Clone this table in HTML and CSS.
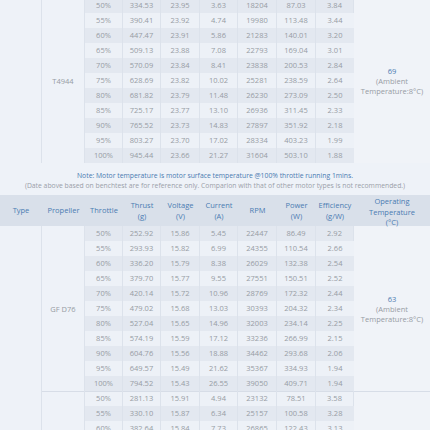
FILE: index.html
```html
<!DOCTYPE html>
<html lang="en">
<head>
    <meta charset="UTF-8">
    <meta name="viewport" content="width=device-width, initial-scale=1">
    <title>Motor Test Data</title>
    <link rel="stylesheet" href="styles.css">
</head>
<body>

<div class="page">

    <table class="data top">
        <colgroup>
            <col class="cType"><col class="cProp"><col class="cNum"><col class="cNum"><col class="cNum2"><col class="cNum"><col class="cNum2"><col class="cNum2"><col class="cNum"><col class="cTemp">
        </colgroup>
        <tbody>
            <tr><td class="merged" rowspan="11"></td><td class="merged" rowspan="11">T4944</td><td>50%</td><td>334.53</td><td>23.95</td><td>3.63</td><td>18204</td><td>87.03</td><td>3.84</td><td class="merged temp" rowspan="11"><span class="hot">69</span><br>(Ambient<br>Temperature:8°C)</td></tr>
            <tr><td>55%</td><td>390.41</td><td>23.92</td><td>4.74</td><td>19980</td><td>113.48</td><td>3.44</td></tr>
            <tr><td>60%</td><td>447.47</td><td>23.91</td><td>5.86</td><td>21283</td><td>140.01</td><td>3.20</td></tr>
            <tr><td>65%</td><td>509.13</td><td>23.88</td><td>7.08</td><td>22793</td><td>169.04</td><td>3.01</td></tr>
            <tr><td>70%</td><td>570.09</td><td>23.84</td><td>8.41</td><td>23838</td><td>200.53</td><td>2.84</td></tr>
            <tr><td>75%</td><td>628.69</td><td>23.82</td><td>10.02</td><td>25281</td><td>238.59</td><td>2.64</td></tr>
            <tr><td>80%</td><td>681.82</td><td>23.79</td><td>11.48</td><td>26230</td><td>273.09</td><td>2.50</td></tr>
            <tr><td>85%</td><td>725.17</td><td>23.77</td><td>13.10</td><td>26936</td><td>311.45</td><td>2.33</td></tr>
            <tr><td>90%</td><td>765.52</td><td>23.73</td><td>14.83</td><td>27897</td><td>351.92</td><td>2.18</td></tr>
            <tr><td>95%</td><td>803.27</td><td>23.70</td><td>17.02</td><td>28334</td><td>403.23</td><td>1.99</td></tr>
            <tr><td>100%</td><td>945.44</td><td>23.66</td><td>21.27</td><td>31604</td><td>503.10</td><td>1.88</td></tr>
        </tbody>
    </table>

    <div class="note">
        <p class="noteMain">Note: Motor temperature is motor surface temperature @100% throttle running 1mins.</p>
        <p class="noteSub">(Date above based on benchtest are for reference only. Comparion with that of other motor types is not recommended.)</p>
    </div>

    <table class="data">
        <colgroup>
            <col class="cType"><col class="cProp"><col class="cNum"><col class="cNum"><col class="cNum2"><col class="cNum"><col class="cNum2"><col class="cNum2"><col class="cNum"><col class="cTemp">
        </colgroup>
        <thead>
            <tr>
                <th>Type</th>
                <th>Propeller</th>
                <th>Throttle</th>
                <th>Thrust<br>(g)</th>
                <th>Voltage<br>(V)</th>
                <th>Current<br>(A)</th>
                <th>RPM</th>
                <th>Power<br>(W)</th>
                <th>Efficiency<br>(g/W)</th>
                <th><div class="tall">Operating<br>Temperature<br>(°C)</div></th>
            </tr>
        </thead>
        <tbody>
            <tr><td class="merged" rowspan="14"></td><td class="merged" rowspan="11">GF D76</td><td>50%</td><td>252.92</td><td>15.86</td><td>5.45</td><td>22447</td><td>86.49</td><td>2.92</td><td class="merged temp" rowspan="11"><span class="hot">63</span><br>(Ambient<br>Temperature:8°C)</td></tr>
            <tr><td>55%</td><td>293.93</td><td>15.82</td><td>6.99</td><td>24355</td><td>110.54</td><td>2.66</td></tr>
            <tr><td>60%</td><td>336.20</td><td>15.79</td><td>8.38</td><td>26029</td><td>132.38</td><td>2.54</td></tr>
            <tr><td>65%</td><td>379.70</td><td>15.77</td><td>9.55</td><td>27551</td><td>150.51</td><td>2.52</td></tr>
            <tr><td>70%</td><td>420.14</td><td>15.72</td><td>10.96</td><td>28769</td><td>172.32</td><td>2.44</td></tr>
            <tr><td>75%</td><td>479.02</td><td>15.68</td><td>13.03</td><td>30393</td><td>204.32</td><td>2.34</td></tr>
            <tr><td>80%</td><td>527.04</td><td>15.65</td><td>14.96</td><td>32003</td><td>234.14</td><td>2.25</td></tr>
            <tr><td>85%</td><td>574.19</td><td>15.59</td><td>17.12</td><td>33236</td><td>266.99</td><td>2.15</td></tr>
            <tr><td>90%</td><td>604.76</td><td>15.56</td><td>18.88</td><td>34462</td><td>293.68</td><td>2.06</td></tr>
            <tr><td>95%</td><td>649.57</td><td>15.49</td><td>21.62</td><td>35367</td><td>334.93</td><td>1.94</td></tr>
            <tr><td>100%</td><td>794.52</td><td>15.43</td><td>26.55</td><td>39050</td><td>409.71</td><td>1.94</td></tr>
            <tr class="groupStart"><td class="merged" rowspan="3"></td><td>50%</td><td>281.13</td><td>15.91</td><td>4.94</td><td>23132</td><td>78.51</td><td>3.58</td><td class="merged temp" rowspan="3"></td></tr>
            <tr><td>55%</td><td>330.10</td><td>15.87</td><td>6.34</td><td>25157</td><td>100.58</td><td>3.28</td></tr>
            <tr><td>60%</td><td>382.64</td><td>15.84</td><td>7.73</td><td>26865</td><td>122.43</td><td>3.13</td></tr>
        </tbody>
    </table>

</div>

</body>
</html>
```

FILE: styles.css
```css
html, body {
    margin: 0;
    padding: 0;
    overflow: hidden;
    background-color: #eef2f8;
}

.page {
    width: 430px;
    font-family: "Open Sans", "DejaVu Sans", sans-serif;
    font-size: 7.5px;
    color: #979ca4;
}

/* tables */
.data {
    width: 430px;
    table-layout: fixed;
    border-collapse: separate;
    border-spacing: 0;
}

.top {
    margin-top: -2px;
}

.cType  { width: 42px; }
.cProp  { width: 43px; }
.cNum   { width: 38px; }
.cNum2  { width: 39px; }
.cTemp  { width: 76px; }

.data td {
    height: 15px;
    padding: 0;
    line-height: 15px;
    text-align: center;
    white-space: nowrap;
    border-right: 1px solid #dce2eb;
    background-color: #edf1f7;
}

.data tbody tr:nth-child(odd) td {
    background-color: #e3e8f0;
}

.data td:last-child {
    border-right: none;
}

/* rowspan cells keep the light colour */
.data tbody tr td.merged {
    background-color: #eef2f8;
    line-height: 10px;
}

.data tbody tr td.temp {
    background-color: #f0f3f8;
    border-right: none;
}

.hot {
    color: #4a7bb1;
}

.groupStart td,
.data td.merged[rowspan="3"] {
    box-shadow: inset 0 1px 0 #d7dde7;
}

/* header */
.data th {
    height: 31px;
    padding: 0;
    font-weight: normal;
    line-height: 10.5px;
    color: #4b7cb2;
    background-color: #d9e0ea;
    text-align: center;
    vertical-align: middle;
}

.tall {
    height: 31px;
    padding-top: 1px;
    overflow: visible;
    box-sizing: border-box;
}

/* note between the tables */
.note {
    margin: 8px 0 4px 0;
    text-align: center;
    line-height: 10px;
    font-size: 6.8px;
}

.note p {
    margin: 0;
    white-space: nowrap;
}

.noteMain {
    color: #4a7bb1;
}

.noteSub {
    color: #9aa0a8;
}
```
